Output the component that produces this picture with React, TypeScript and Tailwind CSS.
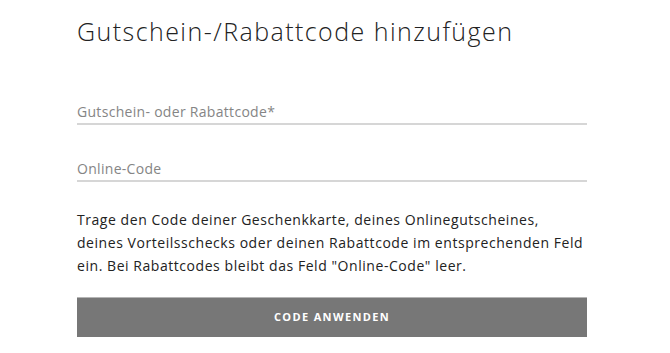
export default function App() {
    return (
        <div className="w-[670px] h-[353px] bg-white pl-[77px] pt-[14px]" style={{ fontFamily: '"Open Sans", "Liberation Sans", sans-serif' }}>
            <div className="w-[510px]">
                {/* Title */}
                <h2 className="text-[25px] leading-[34px] font-light text-[#222] tracking-[1.45px]">
                    Gutschein-/Rabattcode hinzufügen
                </h2>

                {/* Fields */}
                <div className="mt-[51px] flex flex-col gap-[31px]">
                    <input
                        type="text"
                        placeholder="Gutschein- oder Rabattcode*"
                        className="h-[26px] w-full border-b-2 border-[#d6d6d6] text-[14px] tracking-[0.3px] text-[#333] placeholder:text-[#858585] outline-none bg-transparent"
                    />
                    <input
                        type="text"
                        placeholder="Online-Code"
                        className="h-[26px] w-full border-b-2 border-[#d6d6d6] text-[14px] tracking-[0.3px] text-[#333] placeholder:text-[#858585] outline-none bg-transparent"
                    />
                </div>

                {/* Info */}
                <p className="mt-[26px] text-[14px] leading-[23px] tracking-[0.55px] text-[#222]">
                    Trage den Code deiner Geschenkkarte, deines Onlinegutscheines,
                    <br />
                    deines Vorteilsschecks oder deinen Rabattcode im entsprechenden Feld
                    <br />
                    ein. Bei Rabattcodes bleibt das Feld "Online-Code" leer.
                </p>

                <button className="mt-[20px] w-full h-[40px] bg-[#777777] border-t border-[#b5b5b5] text-white text-[11px] font-bold tracking-[1.35px] uppercase">
                    Code anwenden
                </button>
            </div>
        </div>
    );
}
